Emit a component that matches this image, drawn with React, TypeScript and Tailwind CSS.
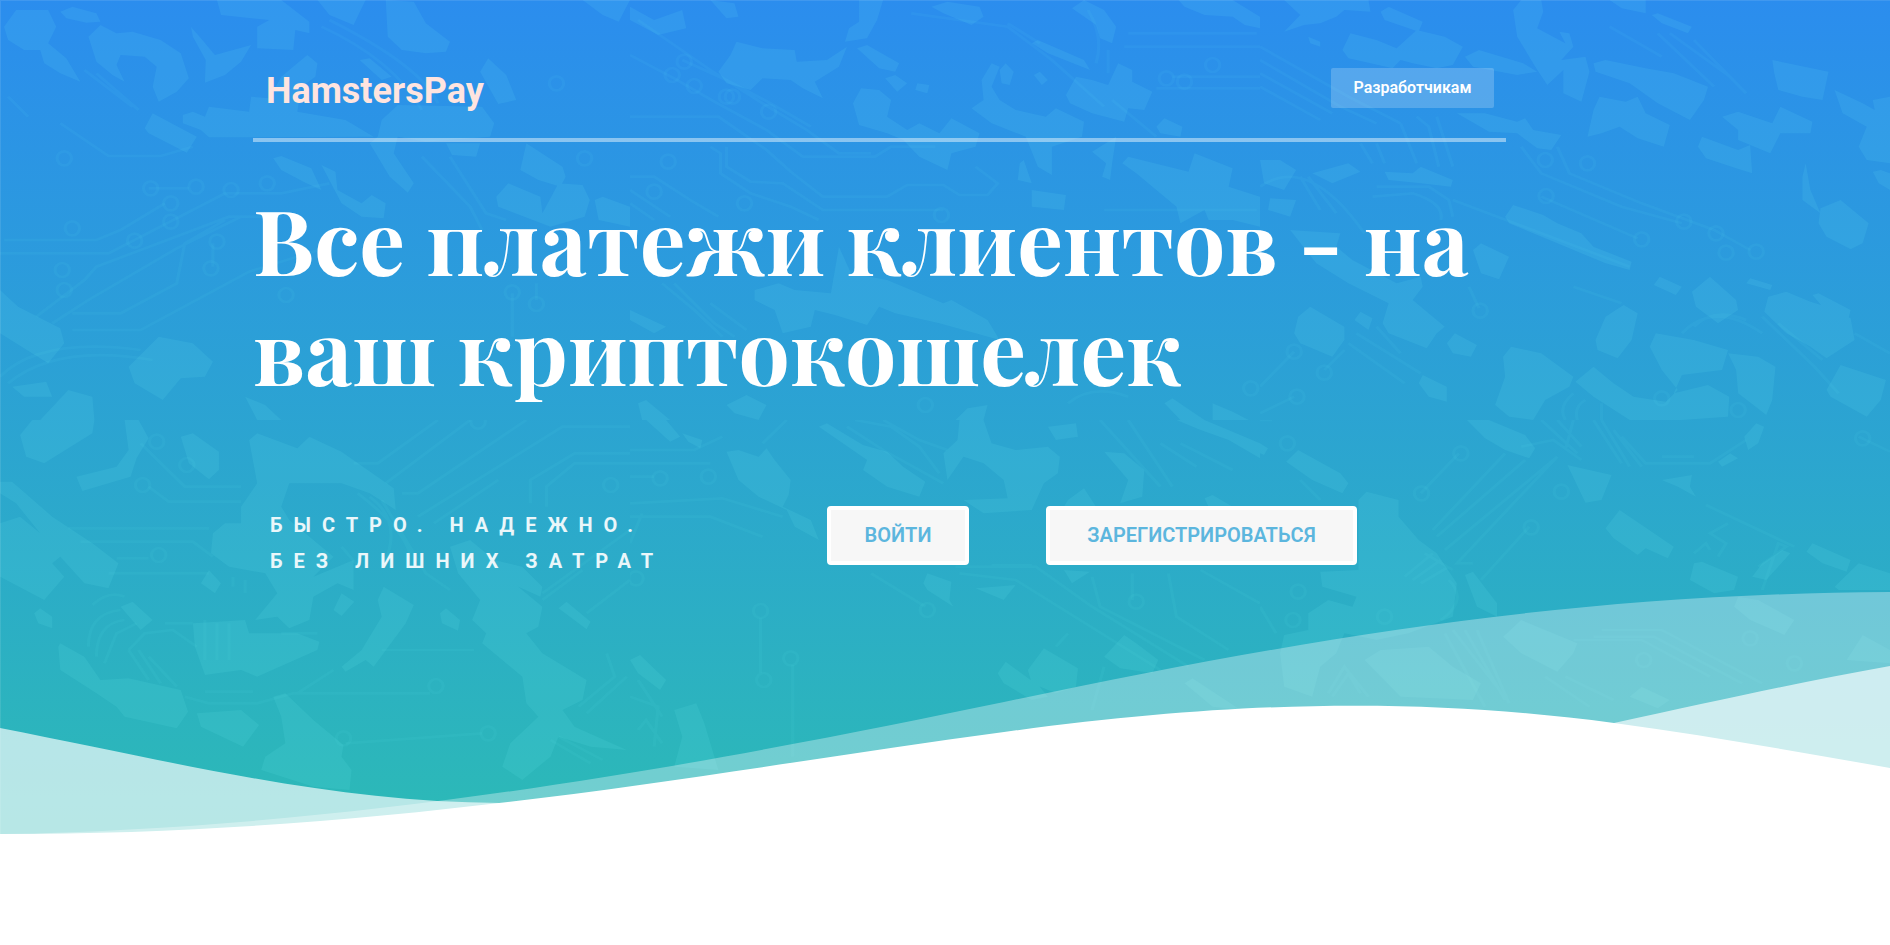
type Tile = { x: number; y: number; shapes: string; traces: string; pads: [number, number][] };

/* Each tile of the circuit pattern is drawn on its own 1568 x 1260 grid. */
const tiles: Tile[] = [
  {
    x: 0,
    y: 0,
    shapes:
      'M10 80L40 30L120 30L140 80L120 130L165 175L200 245L150 220L110 190L100 150L60 150L20 120ZM150 35L180 20L240 40L250 65L215 68L165 55ZM220 110L250 75L290 100L330 95L400 120L450 160L470 235L440 275L395 305L380 260L390 200L360 170L300 165L290 195L310 245L280 225L240 185ZM475 80L500 115L535 165L625 135L600 185L560 225L510 248L512 180L480 110ZM540 0L700 0L770 65L770 100L735 90L730 150L640 145L640 80L670 60L550 45ZM790 0L910 0L880 75L820 45ZM960 0L1030 5L1060 70L1120 125L1110 155L1060 160L1000 150L965 110ZM1450 0L1568 0L1540 65L1500 45ZM360 385L380 340L450 385L490 410L465 458L370 400ZM455 345L480 335L510 350L520 320L620 335L625 290L670 295L700 230L740 190L765 165L790 190L785 230L750 260L740 335L860 360L930 410L520 412L500 390L455 370ZM895 180L920 175L975 230L950 240ZM1195 215L1215 175L1260 225L1285 300L1240 312ZM940 410L950 360L990 315L1200 320L1230 370L1220 410L1060 425L990 410L980 460L1030 550L1015 578L970 530L920 430ZM680 475L700 468L775 505L800 570L760 548L700 510ZM800 495L835 515L840 570L900 610L925 585L960 610L955 655L900 650L850 610ZM1110 430L1195 430L1185 470L1125 465ZM1310 430L1400 500L1408 530L1395 560L1340 540L1295 510ZM1235 590L1265 550L1345 590L1350 640L1390 550L1450 555L1468 600L1455 650L1370 680L1240 620ZM1480 600L1500 590L1568 620V680L1490 660ZM0 870L45 920L150 985L160 1030L120 1090L0 1000ZM320 1100L395 1010L480 1030L530 1085L510 1130L450 1135L405 1200L335 1150ZM30 1160L115 1145L130 1190L60 1190ZM100 1260L170 1170L230 1190L235 1260ZM610 1190L660 1215L700 1260L640 1260Z',
    traces:
      'M20 290L70 350M150 370L270 468H400L480 440M370 565H470M0 760H270L560 580H700L820 550M90 950L210 840L240 800L570 650H700M130 970L220 900L440 745L600 650M180 990H350L620 815L820 740M180 940H300L440 850L460 730L560 660M410 610L300 690L240 720H10M1275 880V1010M1335 850V900M530 730V800M0 1130Q100 1010 350 1050M20 1150Q140 1030 380 1080M800 80Q980 180 1050 330M820 60Q1050 200 1090 310M1120 470L1210 640L1260 660M1050 470L1170 620L1200 690M210 210L330 320M240 220L345 330',
    pads: [[160, 475], [375, 565], [488, 560], [575, 570], [425, 610], [425, 665], [180, 685], [335, 722], [155, 810], [160, 870], [540, 725], [525, 805], [712, 885], [1275, 877], [1335, 912], [1385, 250], [1455, 475], [665, 550]],
  },
  {
    x: 630,
    y: 0,
    shapes:
      'M0 20L60 60L130 30L140 85L70 105L0 60ZM200 0L260 10L270 50L240 55ZM570 0L630 0L615 60L590 115L535 125L545 85L570 65ZM750 20L790 5L870 20L880 50L850 75L780 40ZM1100 25L1130 0L1180 30L1210 80L1200 130L1170 115L1160 75ZM1365 0L1500 0L1568 50V85L1530 75L1500 50L1430 45L1380 20ZM220 215L250 165L265 125L330 145L410 150L415 185L490 180L540 140L520 200L460 245L480 295L430 265L400 240L330 235L300 270L240 250ZM565 145L590 135L670 190L660 215L620 205ZM635 235L660 225L690 250L665 275ZM715 250L745 255L740 280L710 270ZM555 310L575 265L620 270L650 300L640 350L690 390L720 370L770 400L800 355L870 400L860 440L800 460L790 510L720 470L680 420L640 400L570 375ZM875 240L900 190L920 200L900 260L920 300L960 330L1035 350L1060 325L1130 365L1125 410L1050 440L1050 525L1015 500L985 410L900 370L850 325L880 300ZM920 210L935 190L955 215L945 255L925 250ZM1000 130L1015 120L1130 180L1145 210L1040 160ZM1005 225L1020 215L1040 240L1025 255ZM1085 285L1110 230L1150 240L1190 255L1215 190L1250 210L1250 245L1300 275L1280 330L1240 325L1230 365L1150 340L1095 310ZM1310 380L1330 355L1375 380L1370 410L1320 400ZM1150 455L1210 410L1200 490L1195 540L1175 530L1185 490ZM970 490L980 480L1000 550L965 540ZM1000 570L1085 585L1080 630L1000 620ZM1225 490L1240 470L1390 515L1405 460L1500 505L1490 560L1568 590V680L1500 660L1440 660L1430 630L1370 670L1360 620L1260 520ZM310 870L370 850L410 870L500 880L520 740L550 820L640 840L680 860L780 910L800 900L890 960L920 1020L860 1000L770 970L660 940L620 920L590 975L510 945L460 930L450 980L380 1000L360 930L310 900ZM0 930L90 980L60 1000L0 960ZM240 1215L290 1185L340 1215L320 1260L260 1240ZM20 1210L40 1200L100 1260L30 1260ZM810 1260L840 1225L890 1215L880 1260ZM1330 1210L1350 1195L1430 1260H1370ZM1450 1210L1500 1235L1540 1260H1450Z',
    traces:
      'M0 165L110 235L210 305L340 390L430 470H610L650 440H760M20 60L200 210L330 310L440 390L520 460H600M130 180L240 240L350 310L450 380M0 350H220L340 450L400 515L480 590H640L690 555H780L820 585H890L915 550L860 500M240 440V500L300 545L380 550L480 630H780M200 440L225 460V520L300 580L400 620L470 660M0 530H60L150 600L220 650M0 570L100 650M0 610L60 660M700 40L940 80L1050 180L1180 320M940 70L1020 130M1140 30Q1180 110 1160 190M1190 150V220M1200 300L1310 410M80 850L160 930L230 1010M110 850L210 970L260 1010M200 910L290 990M1240 100H1560M1230 140H1568M1350 230H1568M1310 265H1568M1180 630H1560M1090 1210Q1150 1150 1240 1190',
    pads: [[135, 185], [105, 225], [160, 258], [255, 290], [345, 335], [95, 485], [60, 575], [285, 610], [775, 645], [1450, 195], [1335, 235], [1380, 245], [735, 1215], [1545, 1165], [240, 290]],
  },
  {
    x: 1260,
    y: 0,
    shapes:
      'M60 0L270 0L275 35L210 30L190 50L150 70L110 75L60 95L100 45ZM300 35L320 20L405 65L395 95L310 60ZM120 110L150 125L150 140L125 130ZM205 150L225 100L290 120L340 145L390 90L460 110L505 140L480 195L440 205L380 190L350 180L330 205L220 175ZM510 170L545 150L655 190L690 215L640 225L530 200ZM630 30L650 0L700 0L705 35L690 85L760 130L745 95L770 100L780 140L750 180L810 170L820 215L800 305L755 280L755 210L715 255L685 200L640 110ZM870 0L960 0L960 40L900 25ZM975 45L990 40L1075 80L1065 100L1000 70ZM830 190L860 180L960 205L1030 220L1115 260L1105 300L1070 360L990 310L920 250L835 215ZM1275 180L1415 215L1400 300L1350 290L1290 270L1280 220ZM830 330L845 290L910 305L940 290L960 340L1020 375L1005 440L940 415L895 380L850 400L815 410ZM1150 350L1190 335L1275 370L1295 320L1375 365L1370 400L1295 400L1270 460L1190 420L1190 390ZM1430 270L1500 310L1530 330L1525 300L1568 290V490L1510 480L1490 440L1510 380L1450 340ZM1090 440L1100 410L1190 450L1220 435L1225 520L1185 505L1110 475ZM1525 515L1545 510L1568 520V570L1540 550ZM1350 530L1358 490L1370 570L1395 640L1350 600ZM1390 670L1395 625L1445 600L1515 670L1500 730L1470 748L1410 710ZM490 340L560 340L640 365L660 355L680 390L750 405L725 450L690 445L640 400L570 395ZM130 520L220 490L250 515L180 550ZM310 515L380 520L400 500L480 540L475 560L400 550L320 540ZM0 480L50 480L90 510L60 570L10 550ZM25 595L90 600L75 650L20 630ZM610 650L630 615L705 645L740 670L800 700L830 740L925 785L920 810L860 790L740 730L620 670ZM530 750L550 730L620 770L595 838L550 820ZM75 690L200 700L190 740L230 780L340 850L400 830L405 860L380 900L460 980L440 1000L415 1045L320 1000L305 970L320 910L220 850L140 790ZM85 1000L95 950L125 920L210 980L210 1020L180 1070L100 1030ZM235 960L250 935L280 955L270 990ZM465 1030L485 1000L540 1035L525 1070L480 1060ZM395 1150L405 1125L465 1160L465 1205L420 1190ZM585 1215L610 1130L605 1070L625 1040L700 1060L780 1130L770 1160L710 1200L680 1260L620 1250ZM835 1020L860 950L905 915L940 940L925 1020L890 1075L840 1050ZM980 855L995 830L1050 860L1035 885ZM1075 875L1120 830L1185 900L1190 930L1140 970L1085 920ZM1210 850L1220 835L1275 855L1270 870ZM1255 935L1265 890L1310 875L1370 905L1410 920L1470 955L1480 1020L1410 1075L1370 1040L1310 1000ZM1375 885L1390 880L1470 930L1465 955L1400 920ZM985 1000L1080 1020L1165 1050L1150 1110L1050 1125L1030 1180L1115 1155L1168 1190L1165 1250L1050 1260H920L830 1190L785 1145L830 1100L880 1150L930 1190L1010 1205L1040 1170L1000 1110L970 1040ZM1165 1060L1240 1070L1283 1100L1275 1200L1260 1245L1190 1180L1185 1110ZM1410 1170L1445 1095L1558 1140L1545 1200L1510 1250L1420 1190Z',
    traces:
      'M0 140L220 290L350 370M0 180L200 320L290 370M0 220L180 340M0 260L150 360M350 370L390 490M390 350L420 380L445 500M440 350L480 500M250 430L280 490M290 430L310 490M650 440L700 520L900 620L1050 670M740 440L770 520L950 610L1130 690L1220 750M700 590L940 715M480 600L700 700L920 800M780 860L900 910M990 100L1130 260M1020 100L1170 230M1080 120L1210 280M870 80L1000 170M0 560Q120 460 260 700M100 530L150 630M120 530L190 640M290 560H420L470 600L480 650M280 590L380 580Q460 610 450 660M520 860L545 925M0 1160L85 1055M210 1050L160 1110M0 1240L85 1190M220 1030L360 1150M240 1000L400 1120M290 980L350 1060M1250 950L1380 1100L1440 1180M1290 970L1400 1080M1080 980Q1130 920 1210 960M1050 1000Q1130 900 1250 1000M780 1180Q740 1220 760 1260M810 1200Q780 1220 790 1260M850 1210V1260M1480 1000L1568 1060',
    pads: [[710, 480], [815, 490], [712, 588], [950, 718], [1055, 665], [1160, 758], [1235, 755], [1135, 700], [548, 932], [85, 1055], [160, 1118], [92, 1190], [1190, 1230], [1000, 1195]],
  },
  {
    x: 0,
    y: 420,
    shapes:
      'M80 0L235 0L230 40L110 130L65 110L50 45ZM310 0L345 0L370 55L340 115L325 170L205 213L190 170L290 140L320 90ZM450 50L480 40L545 95L545 150L520 178L470 130ZM620 60L640 40L740 85L770 50L850 95L980 205L985 270L920 220L850 190L720 190L700 260L720 300L830 410L780 470L880 420L880 510L840 490L780 530L770 600L720 625L690 590L635 600L690 520L660 460L570 440L525 400L530 340L560 310L600 310L600 260L640 190ZM0 185L30 185L130 290L230 370L295 430L270 505L210 490L150 410L130 430L160 470L110 540L0 470V310L50 290L100 340L40 250L0 220ZM500 490L520 450L550 490L535 520ZM85 580L100 565L130 590L130 625L95 610ZM830 570L850 520L882 545L850 588ZM940 540L955 500L1030 555L1010 610L930 740L910 720L860 755L850 740L900 690L950 590ZM1095 580L1110 565L1145 600L1140 632L1100 610ZM1120 380L1170 360L1230 420L1300 440L1350 500L1345 530L1290 500L1350 560L1340 620L1310 640L1350 700L1460 780L1450 840L1400 870L1430 920L1560 990L1470 980L1390 950L1370 1010L1300 1080L1250 1040L1270 970L1340 890L1310 850L1300 770L1200 670L1210 640L1175 600L1195 540L1140 460ZM1390 565L1410 545L1470 605L1460 628ZM300 560L330 545L380 600L350 630ZM480 610L610 600L620 640L740 640L795 665L790 690L640 770L600 750L510 765L485 680ZM145 680L150 670L210 710L250 780L320 775L450 810L468 875L440 925L310 890L290 860L240 820L150 750ZM490 880L600 870L645 915L605 980L500 920ZM680 830L710 820L780 900L855 975L850 1010L875 1050L870 1110L780 1100L650 1050L660 1010L710 970L700 890Z',
    traces:
      'M350 70L460 200H600M370 200L420 245H600M170 325H520M200 365H480L530 410M290 415H370M270 460H520M880 130H940L1090 0M960 190L1170 0M1000 220H1040L1310 0M1040 290L1400 20H1568M1080 310L1240 180M1320 250V180L1430 100H1568M1360 260V200L1430 130H1568M1350 520L1568 330M1350 540L1450 450M1460 580L1568 480M230 555Q270 510 310 530M220 680Q220 580 300 570M240 710Q240 610 310 600M260 730L290 640L340 610M320 690L360 640L430 630L490 680M320 690L370 780M345 690L400 790M370 710L440 800M410 610H480M700 640H790M510 815H630M460 830L520 850H640L730 820H1070M830 750L740 820M950 690H1180M860 970L1200 940M850 380L900 450M890 220Q1000 320 1020 400M920 230Q1000 300 960 420M950 240L1060 460L1120 510M580 470V500M610 480V520M1440 860L1530 770L1510 700M1460 880L1560 770M1370 960L1470 1030M1390 950L1500 1020M510 600V720M540 610V720M570 610V720',
    pads: [[390, 65], [355, 195], [395, 405], [1085, 798], [1215, 940], [855, 955], [1190, 5], [1520, 195], [465, 135]],
  },
  {
    x: 630,
    y: 420,
    shapes:
      'M40 0L90 0L125 50L100 65ZM130 40L180 60L175 85L145 65ZM240 95L270 90L320 110L340 85L360 120L400 180L395 225L380 260L450 300L470 360L410 320L390 270L320 230L270 180ZM470 20L490 10L580 75L640 95L680 140L735 185L720 230L640 200L580 150L590 120ZM820 0L880 0L900 70L960 90L1040 80L1070 110L1065 160L1030 190L1000 270L880 280L830 240L940 235L930 180L880 130L830 110L790 180L780 100L815 60ZM1040 20L1110 10L1115 50L1060 60ZM1180 95L1230 100L1280 150L1275 230L1220 250L1240 180ZM1090 240L1130 205L1160 260H1080ZM1430 235L1450 225L1500 260H1440ZM1360 0L1430 0L1568 70V115L1490 60L1420 30ZM730 490L740 460L800 485L795 540L805 560L740 510ZM860 505L960 495L930 540ZM1080 450L1145 455L1100 490ZM990 750L1030 685L1115 745L1110 800L1060 820L1000 790ZM915 760L935 725L1020 800L1040 830L1000 840L930 790ZM1180 710L1230 645L1260 670L1315 720L1300 760L1220 745ZM0 720L25 705L90 780L75 810L20 760ZM110 870L165 850L185 910L220 1050L110 1040L130 950ZM1380 790L1400 775L1520 870L1450 860Z',
    traces:
      'M0 90H160L230 50M0 130H200M0 170H60M0 250L230 235L380 290M0 290H200L330 350M0 370L30 280M390 0L330 70M540 20L630 90L780 190M560 0L650 20L720 80L770 160M630 0L720 60L790 90M600 460L735 560M325 595V760M405 735V1010M810 440H1010L1150 560L1390 740M820 460L960 480L1200 660L1320 750M1150 470L1170 560L1430 720M1250 460V540M1340 460L1360 590L1490 690M1420 450L1568 550M900 435H1000M1090 640L1060 680M1180 740L1150 870M1170 0L1320 200M1320 70L1410 140M1370 70L1500 150M1240 0L1350 200M0 830L70 860L60 980M20 780L80 890M20 930L40 900L80 970',
    pads: [[75, 175], [195, 170], [325, 573], [333, 780], [400, 715], [740, 570], [1260, 545], [15, 475]],
  },
  {
    x: 1260,
    y: 420,
    shapes:
      'M515 0L570 0L660 45L685 85L670 115L610 90L560 55ZM0 70L20 85L10 105L0 100ZM65 125L95 90L200 160L220 190L205 220L130 180ZM245 240L265 215L345 240L345 290L395 360L440 400L490 490L480 590L370 640L290 660L210 640L190 700L150 740L130 830L60 800L50 700L60 645L120 630L120 580L170 540L230 560L240 530L155 500L150 455L245 450ZM510 465L530 455L590 550L590 590L540 560ZM605 650L650 600L790 670L780 700L740 755L650 700ZM300 690L420 680L480 740L550 790L530 840L350 830L260 720ZM765 135L875 165L850 240L810 248ZM1000 180L1075 165L1070 200L1085 230L1040 200ZM1205 50L1235 10L1255 20L1240 70L1215 90ZM1140 125L1170 100L1190 115L1150 140ZM860 325L895 270L1030 380L1015 415L960 385L940 405L880 355ZM1070 480L1080 430L1100 425L1190 470L1180 510L1130 520ZM1225 470L1250 430L1300 390L1320 400L1260 480ZM1360 395L1375 370L1470 420L1460 455L1400 430ZM1430 500L1490 430L1568 460V510H1440ZM1180 560L1190 530L1240 540L1330 600L1305 645L1220 600ZM1460 720L1500 645L1568 690V730ZM920 830L950 800L1020 840L990 865Z',
    traces:
      'M495 100L400 220M610 100L430 330M660 120L440 350M740 110L460 390M670 320L550 480M740 110L490 430H530M650 80L730 60L800 120M700 0L790 100M740 0L800 80M780 0L760 90M830 0L900 130M850 0L920 140M880 30L950 140M900 50L960 130H1120L1210 60M1000 110H1080M1110 255L1330 380M1165 310L1120 340L1160 370L1140 410M1080 400L1110 370L1120 390M1240 440L1310 380L1290 370L1250 510M100 180L150 240M410 400L480 450M360 470L430 400M380 480L450 420M400 490L470 440M470 480Q520 540 450 600M460 640L560 860M480 630L590 800M510 630L610 840M540 630L620 850M0 560L40 640M830 650H980L1200 790M850 630H1000L1250 790M780 660H950L1120 770M710 770L820 860M760 770L880 840M170 820L210 740L270 830M180 830L220 760L250 820M0 0L30 0M1490 50L1568 95',
    pads: [[500, 100], [402, 220], [675, 322], [750, 215], [95, 515], [82, 600], [68, 70], [1220, 655], [1500, 55], [955, 720], [310, 590], [1330, 730]],
  },
];

function HeroBackdrop() {
  return (
    <svg
      aria-hidden="true"
      className="absolute inset-0 h-full w-full"
      viewBox="0 0 1890 945"
      preserveAspectRatio="none"
    >
      <defs>
        <linearGradient id="sky" gradientUnits="userSpaceOnUse" x1="0" y1="0" x2="0" y2="834">
          <stop offset="0" stopColor="#2b8dee" />
          <stop offset="1" stopColor="#2cbab6" />
        </linearGradient>
      </defs>
      <rect width="1890" height="945" fill="url(#sky)" />
      {tiles.map((t) => (
        <svg
          key={`${t.x}-${t.y}`}
          x={t.x}
          y={t.y}
          width="630"
          height="420"
          viewBox="0 0 1568 1260"
          preserveAspectRatio="none"
        >
          <path d={t.shapes} fill="#7cffff" fillOpacity="0.09" />
          <g fill="none" stroke="#7cffff" strokeOpacity="0.05" strokeWidth="8">
            <path d={t.traces} />
            {t.pads.map(([cx, cy]) => (
              <ellipse key={`${cx}-${cy}`} cx={cx} cy={cy} rx="18" ry="21" />
            ))}
          </g>
        </svg>
      ))}
      <path d="M0 0H1890V1H1V945H0Z" fill="#fff" fillOpacity="0.1" />
      <path
        d="M0 728C180 763 330 802 500 803C850 805 1300 800 1614 723C1720 700 1800 682 1890 666V945H0Z"
        fill="#fff"
        fillOpacity="0.66"
      />
      <path
        d="M0 834C390 828 760 752 1004 702C1300 640 1560 594 1890 592V945H0Z"
        fill="#fff"
        fillOpacity="0.33"
      />
      <path
        d="M0 834C400 834 700 773 1004 732C1260 697 1440 700 1614 723C1710 736 1800 752 1890 768V945H0Z"
        fill="#fff"
      />
    </svg>
  );
}

export default function App() {
  return (
    <div className="relative min-h-screen overflow-hidden bg-white font-['Roboto',sans-serif]">
      <HeroBackdrop />
      <div className="relative ml-[253px] max-w-[1253px]">
        <header className="flex h-[142px] items-end justify-between border-b-4 border-white/45 pr-3 pb-[26px] pl-[13px]">
          <a href="#" className="text-[36px] leading-[42px] font-bold text-[#ffe4df]">
            HamstersPay
          </a>
          <a
            href="#developers"
            className="mb-1 flex h-10 w-[163px] items-center justify-center rounded-xs bg-white/20 text-[16px] font-semibold text-white"
          >
            Разработчикам
          </a>
        </header>

        <main>
          <h1 className="pt-[42px] font-['Playfair_Display','Liberation_Serif',serif] text-[91px] leading-[110px] font-bold text-white">
            Все платежи клиентов - на ваш криптокошелек
          </h1>
          <div className="mt-[102px] flex items-start pl-[17px]">
            <p className="w-[557px] pt-px text-[20px] leading-9 font-bold tracking-[11px] text-white/90 uppercase">
              Быстро. Надежно.
              <br />
              Без лишних затрат
            </p>
            <div className="flex gap-[77px]">
              <button
                type="button"
                className="h-[59px] w-[142px] rounded border-4 border-white bg-[#f7f7f7] pb-0.5 text-[20px] font-semibold text-[#5cb6de] uppercase"
              >
                Войти
              </button>
              <button
                type="button"
                className="h-[59px] w-[311px] rounded border-4 border-white bg-[#f7f7f7] pb-0.5 text-[20px] font-semibold text-[#5cb6de] uppercase"
              >
                Зарегистрироваться
              </button>
            </div>
          </div>
        </main>
      </div>
    </div>
  );
}
